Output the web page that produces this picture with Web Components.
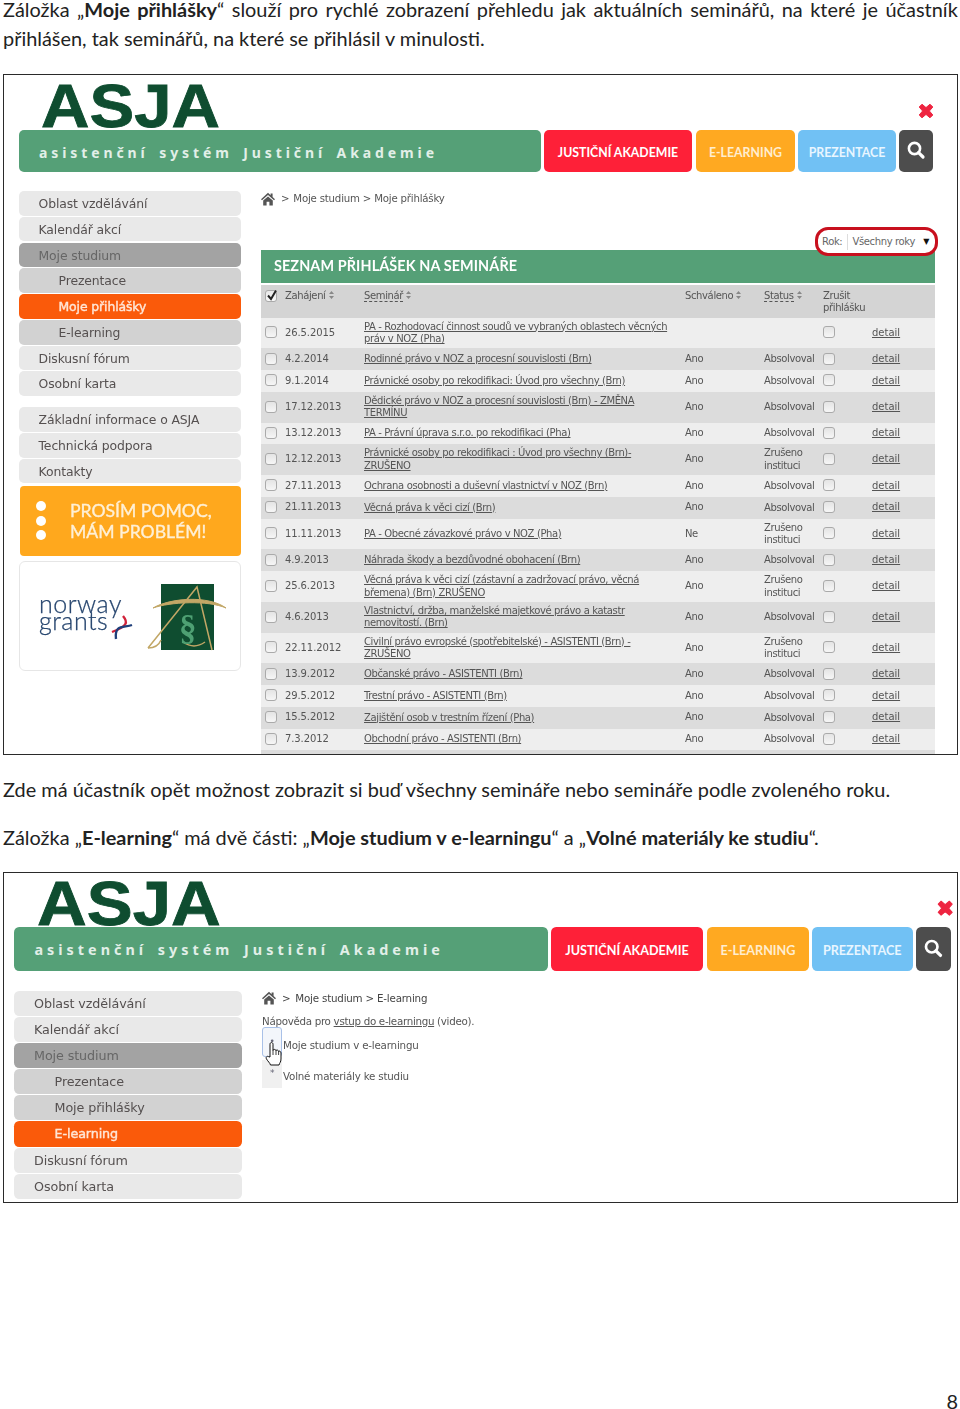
<!DOCTYPE html>
<html lang="cs">
<head>
<meta charset="utf-8">
<title>Moje přihlášky</title>
<style>
    html, body { margin: 0; padding: 0; background: #fff; }
    body { height: 1409px; overflow: hidden; font-family: "Lato", "Liberation Sans", sans-serif; color: #222; }
</style>
</head>
<body>
<doc-page>
    <doc-para justify style="margin-top:-5px">Záložka „<b>Moje přihlášky</b>“ slouží pro rychlé zobrazení přehledu jak aktuálních seminářů, na které je účastník přihlášen, tak seminářů, na které se přihlásil v minulosti.</doc-para>

    <asja-shot style="margin-top:21px;height:681px">
        <asja-header style="--top:55px;--left:15px;--bar:522px;--logo-left:22px"></asja-header>
        <shot-body style="--gap:20px;--mt:19px">
            <side-nav style="--item-gap:1.2px">
                <nav-item>Oblast vzdělávání</nav-item>
                <nav-item>Kalendář akcí</nav-item>
                <nav-item kind="open">Moje studium</nav-item>
                <nav-item kind="sub">Prezentace</nav-item>
                <nav-item kind="active">Moje přihlášky</nav-item>
                <nav-item kind="sub">E-learning</nav-item>
                <nav-item>Diskusní fórum</nav-item>
                <nav-item>Osobní karta</nav-item>
                <nav-item style="margin-top:10px">Základní informace o ASJA</nav-item>
                <nav-item>Technická podpora</nav-item>
                <nav-item>Kontakty</nav-item>
                <help-box></help-box>
                <partner-box></partner-box>
            </side-nav>
            <reg-main>
                <crumb-bar>Moje studium &gt; Moje přihlášky</crumb-bar>
                <seminar-table>
                    <seminar-row date="26.5.2015">PA - Rozhodovací činnost soudů ve vybraných oblastech věcných práv v NOZ (Pha)</seminar-row>
                    <seminar-row date="4.2.2014" approved="Ano" status="Absolvoval">Rodinné právo v NOZ a procesní souvislosti (Brn)</seminar-row>
                    <seminar-row date="9.1.2014" approved="Ano" status="Absolvoval">Právnické osoby po rekodifikaci: Úvod pro všechny (Brn)</seminar-row>
                    <seminar-row date="17.12.2013" approved="Ano" status="Absolvoval">Dědické právo v NOZ a procesní souvislosti (Brn) - ZMĚNA TERMÍNU</seminar-row>
                    <seminar-row date="13.12.2013" approved="Ano" status="Absolvoval">PA - Právní úprava s.r.o. po rekodifikaci (Pha)</seminar-row>
                    <seminar-row date="12.12.2013" approved="Ano" status="Zrušeno instituci">Právnické osoby po rekodifikaci : Úvod pro všechny (Brn)- ZRUŠENO</seminar-row>
                    <seminar-row date="27.11.2013" approved="Ano" status="Absolvoval">Ochrana osobnosti a duševní vlastnictví v NOZ (Brn)</seminar-row>
                    <seminar-row date="21.11.2013" approved="Ano" status="Absolvoval">Věcná práva k věci cizí (Brn)</seminar-row>
                    <seminar-row date="11.11.2013" approved="Ne" status="Zrušeno instituci">PA - Obecné závazkové právo v NOZ (Pha)</seminar-row>
                    <seminar-row date="4.9.2013" approved="Ano" status="Absolvoval">Náhrada škody a bezdůvodné obohacení (Brn)</seminar-row>
                    <seminar-row date="25.6.2013" approved="Ano" status="Zrušeno instituci">Věcná práva k věci cizí (zástavní a zadržovací právo, věcná břemena) (Brn) ZRUŠENO</seminar-row>
                    <seminar-row date="4.6.2013" approved="Ano" status="Absolvoval">Vlastnictví, držba, manželské majetkové právo a katastr nemovitostí. (Brn)</seminar-row>
                    <seminar-row date="22.11.2012" approved="Ano" status="Zrušeno instituci">Civilní právo evropské (spotřebitelské) - ASISTENTI (Brn) - ZRUŠENO</seminar-row>
                    <seminar-row date="13.9.2012" approved="Ano" status="Absolvoval">Občanské právo - ASISTENTI (Brn)</seminar-row>
                    <seminar-row date="29.5.2012" approved="Ano" status="Absolvoval">Trestní právo - ASISTENTI (Brn)</seminar-row>
                    <seminar-row date="15.5.2012" approved="Ano" status="Absolvoval">Zajištění osob v trestním řízení (Pha)</seminar-row>
                    <seminar-row date="7.3.2012" approved="Ano" status="Absolvoval">Obchodní právo - ASISTENTI (Brn)</seminar-row>
                    <seminar-row blank></seminar-row>
                </seminar-table>
            </reg-main>
        </shot-body>
    </asja-shot>

    <doc-para style="margin-top:20px">Zde má účastník opět možnost zobrazit si buď všechny semináře nebo semináře podle zvoleného roku.</doc-para>
    <doc-para style="margin-top:19px">Záložka „<b>E-learning</b>“ má dvě části: „<b>Moje studium v e-learningu</b>“ a „<b>Volné materiály ke studiu</b>“.</doc-para>

    <asja-shot style="margin-top:20px;height:331px">
        <asja-header style="--top:53px;--left:9.7px;--bar:520px;--logo-left:22.5px;zoom:1.027"></asja-header>
        <shot-body style="--gap:19px;--mt:20px;--side-left:10px">
            <side-nav style="--item-gap:.9px;zoom:1.027">
                <nav-item>Oblast vzdělávání</nav-item>
                <nav-item>Kalendář akcí</nav-item>
                <nav-item kind="open">Moje studium</nav-item>
                <nav-item kind="sub">Prezentace</nav-item>
                <nav-item kind="sub">Moje přihlášky</nav-item>
                <nav-item kind="active">E-learning</nav-item>
                <nav-item>Diskusní fórum</nav-item>
                <nav-item>Osobní karta</nav-item>
            </side-nav>
            <learn-panel></learn-panel>
        </shot-body>
    </asja-shot>

    <page-number>8</page-number>
</doc-page>

<script>
function defineEl(name, html, extra) {
    const tpl = document.createElement("template");
    tpl.innerHTML = html;
    const cls = class extends HTMLElement {
        constructor() {
            super();
            this.attachShadow({ mode: "open" }).appendChild(tpl.content.cloneNode(true));
        }
        connectedCallback() {
            if (extra) extra(this);
        }
    };
    customElements.define(name, cls);
}

const UI_FONT = `"DejaVu Sans", "Liberation Sans", sans-serif`;

defineEl("doc-page", `
    <style>:host { display: block; padding: 0 2px 0 3px; }</style>
    <slot></slot>
`);

defineEl("doc-para", `
    <style>
        :host { display: block; font-size: 19.9px; line-height: 29px; color: #222; }
        :host([justify]) { text-align: justify; }
    </style>
    <slot></slot>
`);

defineEl("page-number", `
    <style>:host { display: block; text-align: right; margin-top: 186px; font-size: 19.9px; line-height: 24px; color: #222; }</style>
    <slot></slot>
`);

defineEl("asja-shot", `
    <style>
        :host { display: block; box-sizing: border-box; border: 1px solid #2a2a2a; background: #fff; overflow: hidden; }
        .in { filter: blur(.35px); height: 100%; }
    </style>
    <div class="in"><slot></slot></div>
`);

defineEl("asja-header", `
    <style>
        :host { display: block; padding-left: var(--left); font-family: "Lato", sans-serif; }
        .top { height: var(--top); position: relative; }
        .logo {
            position: absolute; left: var(--logo-left); bottom: -7px; transform: scaleX(1.1); transform-origin: left;
            font: bold 61px/61px "Liberation Sans", sans-serif; letter-spacing: 0; color: #0f4d30;
            -webkit-text-stroke: .8px #0f4d30;
        }
        .x { position: absolute; left: 899px; bottom: 11px; display: block; }
        .row { display: flex; gap: 3px; height: 42px; position: relative; }
        .bar {
            width: var(--bar); background: #55a077; border-radius: 5px; box-sizing: border-box;
            padding: 3px 0 0 20px; display: flex; align-items: center;
            font: bold 14px/1 "Noto Sans", sans-serif; letter-spacing: 3.9px; word-spacing: 3px; color: #e2efe8; white-space: nowrap;
        }
        .b {
            border-radius: 5px; color: #fff; font-weight: 700; font-size: 12.3px; white-space: nowrap; box-sizing: border-box; padding-top: 2px;
            display: flex; align-items: center; justify-content: center; opacity: .98;
        }
        .red { width: 148px; background: #fe1c35; }
        .org { width: 99px; background: #ffa81d; color: #ffedcf; margin-left: 1px; }
        .blu { width: 98px; background: #6fc0f4; color: #e8f6ff; }
        .drk { width: 34px; background: #4a4a4a; padding-top: 0; }
    </style>
    <div class="top">
        <div class="logo">ASJA</div>
        <svg class="x" width="16" height="16" viewBox="0 0 16 16"><path d="M1.2 4 4 1.2 8 4.6 12 1.2 14.8 4 11.4 8 14.8 12 12 14.8 8 11.4 4 14.8 1.2 12 4.6 8Z" fill="#ee2440" stroke="#ee2440" stroke-linejoin="round"/></svg>
    </div>
    <div class="row">
        <div class="bar">asistenční systém Justiční Akademie</div>
        <div class="b red">JUSTIČNÍ AKADEMIE</div>
        <div class="b org">E-LEARNING</div>
        <div class="b blu">PREZENTACE</div>
        <div class="b drk">
            <svg width="20" height="20" viewBox="0 0 20 20" style="margin-top:-2px"><circle cx="8.5" cy="8.5" r="5.6" fill="none" stroke="#fff" stroke-width="2.6"/><path d="M12.6 12.6 17 17" stroke="#fff" stroke-width="3.2" stroke-linecap="round"/></svg>
        </div>
    </div>
`);

defineEl("shot-body", `
    <style>
        :host { display: flex; align-items: flex-start; gap: var(--gap); margin-top: var(--mt); padding-left: var(--side-left, 15px); }
    </style>
    <slot></slot>
`);

defineEl("side-nav", `
    <style>:host { display: flex; flex-direction: column; gap: var(--item-gap); width: 222px; flex: none; }</style>
    <slot></slot>
`);

defineEl("nav-item", `
    <style>
        :host {
            display: block; height: 24.6px; box-sizing: border-box; padding-left: 19.5px;
            border-radius: 5px; background: #e9e9e9; color: #555050;
            font: 12.4px/26px ${UI_FONT}; letter-spacing: -.1px; white-space: nowrap;
        }
        :host([kind="open"]) { background: #a3a3a3; color: #666; }
        :host([kind="sub"]) { background: #d2d2d2; padding-left: 39.5px; }
        :host([kind="active"]) { background: #fa5a0a; color: #ffe6d6; padding-left: 39.5px; -webkit-text-stroke: .4px #ffe6d6; }
    </style>
    <slot></slot>
`);

defineEl("help-box", `
    <style>
        :host {
            display: flex; align-items: center; height: 70px; margin: 1px 0 0 1px; width: 221px; box-sizing: border-box;
            background: #ffa81d; border-radius: 4px; color: #fff0d6; font-family: "Lato", sans-serif;
        }
        .dots { display: flex; flex-direction: column; gap: 4.5px; margin: 0 24px 0 16px; }
        .dots i { display: block; width: 10px; height: 10px; border-radius: 50%; background: #fff; }
        .t { font-size: 17.6px; line-height: 21px; font-weight: 400; -webkit-text-stroke: .35px #fff0d6; white-space: nowrap; }
    </style>
    <div class="dots"><i></i><i></i><i></i></div>
    <div class="t">PROSÍM POMOC,<br>MÁM PROBLÉM!</div>
`);

defineEl("partner-box", `
    <style>
        :host {
            display: block; position: relative; height: 110px; margin-top: 4px; box-sizing: border-box;
            border: 1px solid #e6e6e6; border-radius: 6px; background: #fff;
        }
        .nw { position: absolute; left: 19px; top: 33px; font: 300 25px/17px "Lato", sans-serif; letter-spacing: .5px; color: #27466f; -webkit-text-stroke: .25px #27466f; }
        svg { position: absolute; left: 0; top: 0; }
        .par { position: absolute; left: 159px; top: 47px; font: bold 35px/40px "Liberation Serif", serif; color: #4ea073; }
    </style>
    <div class="nw">norway<br>grants</div>
    <svg width="222" height="110" viewBox="0 0 222 110">
        <path d="M103 54C108 60 108 64 92 70" fill="none" stroke="#d1233a" stroke-width="2.4"/>
        <path d="M112 63C104 66 94 62 96 77" fill="none" stroke="#1f3f7a" stroke-width="2.4"/>
        <rect x="141" y="22" width="53" height="66" fill="#0f4d30"/>
        <path d="M128 86 177 25 192 88" fill="none" stroke="#c2a766" stroke-width="1.5"/>
        <path d="M133 46C150 36 188 33 206 46C188 38 150 40 133 46Z" fill="#c2a766" stroke="#c2a766"/>
        <path d="M128 86C134 86 139 83 141 78" fill="none" stroke="#c2a766" stroke-width="1.5"/>
        <path d="M163 80C170 85 178 85 185 80" fill="none" stroke="#c2a766" stroke-width="1.5"/>
    </svg>
    <div class="par">§</div>
`);

defineEl("reg-main", `
    <style>
        :host { display: block; width: 674px; flex: none; position: relative; }
    </style>
    <slot></slot>
    <year-filter></year-filter>
`);

const HOME_ICON = `<svg width="14" height="14" viewBox="0 0 14 14" style="flex:none"><path d="M7 .8 0 7.2 1 8.3 7 3 13 8.3 14 7.2 11.6 5V1.4H9.6V3.2Z" fill="#555"/><path d="M2.2 8.6 7 4.4 11.8 8.6V13.6H8.4V9.8H5.6V13.6H2.2Z" fill="#555"/></svg>`;

defineEl("crumb-bar", `
    <style>
        :host {
            display: flex; align-items: flex-start; gap: 6px; height: 58.5px; padding-top: .5px; color: #555;
            font: 10.2px/14px ${UI_FONT}; letter-spacing: -.2px; white-space: nowrap;
        }
        span + span { margin-left: -2px; }
    </style>
    ${HOME_ICON}<span>&gt;</span><span><slot></slot></span>
`);

defineEl("year-filter", `
    <style>
        :host {
            position: absolute; left: 554px; top: 36px; width: 123px; height: 29px; box-sizing: border-box;
            border: 3px solid #c8101e; border-radius: 13px; background: #fff; display: flex; align-items: center;
            padding-left: 4px; color: #666; font: 10px/1 ${UI_FONT}; letter-spacing: -.35px;
        }
        .sel {
            margin-left: 5px; width: 88px; height: 16px; box-sizing: border-box; border-left: 1px solid #ddd;
            display: flex; align-items: center; justify-content: space-between; padding: 0 6px 0 4px; white-space: nowrap;
        }
        .sel i { font-style: normal; color: #111; font-size: 8px; }
    </style>
    <span>Rok:</span><div class="sel"><span>Všechny roky</span><i>▼</i></div>
`);

const SORT = `<svg width="5" height="8" viewBox="0 0 5 8" style="margin-left:3px"><path d="M2.5 0 5 3H0ZM2.5 8 0 5H5Z" fill="#888"/></svg>`;

defineEl("seminar-table", `
    <style>
        :host { display: block; font: 10px/12.4px ${UI_FONT}; letter-spacing: -.37px; color: #555; }
        .title {
            height: 33px; background: #55a077; color: #fff; display: flex; align-items: center; padding-left: 13px;
            font: bold 14.4px/1 "Lato", sans-serif; letter-spacing: .1px; margin-bottom: 2px;
        }
        .head {
            display: grid; grid-template-columns: 24px 79px 321px 79px 59px 112px; align-items: start;
            height: 32.5px; background: #d4d4d4; box-sizing: border-box; padding-top: 5px;
        }
        .box {
            width: 12px; height: 12px; margin-left: 4px; box-sizing: border-box; border: 1px solid #aaa; border-radius: 3px;
            background: linear-gradient(#e8e8e8, #f8f8f8); position: relative;
        }
        .box svg { position: absolute; left: 0; top: -2px; }
        .dot { border-bottom: 1px dashed #555; }
    </style>
    <div class="title">SEZNAM PŘIHLÁŠEK NA SEMINÁŘE</div>
    <div class="head">
        <div class="box"><svg width="12" height="12" viewBox="0 0 12 12"><path d="M2 6.5 5 10 10 1.5" fill="none" stroke="#222" stroke-width="2"/></svg></div>
        <div>Zahájení${SORT}</div>
        <div><span class="dot">Seminář</span>${SORT}</div>
        <div>Schváleno${SORT}</div>
        <div><span class="dot">Status</span>${SORT}</div>
        <div>Zrušit<br>přihlášku</div>
    </div>
    <slot></slot>
`);

defineEl("seminar-row", `
    <style>
        :host {
            display: grid; grid-template-columns: 24px 79px 321px 79px 59px 49px 63px; align-items: center;
            min-height: 21.8px; background: #eeeeee;
        }
        :host(:nth-child(even)) { background: #dcdcdc; }
        .box {
            width: 12px; height: 12px; margin: -1px 0 0 4px; box-sizing: border-box; border: 1px solid #aaa; border-radius: 3px;
            background: linear-gradient(#e4e4e4, #f6f6f6);
        }
        .box.c { margin-left: 0; }
        .ti { text-decoration: underline; padding: 3px 0 2.9px; width: 310px; }
        .da { letter-spacing: -.1px; }
        .de { text-decoration: underline; letter-spacing: 0; }
        .st { width: 54px; padding: 3px 0 2.9px; }
    </style>
    <div class="box"></div>
    <div class="da"></div>
    <div class="ti"><slot></slot></div>
    <div class="ap"></div>
    <div class="st"></div>
    <div class="box c"></div>
    <div class="de">detail</div>
`, el => {
    const s = el.shadowRoot;
    s.querySelector(".da").textContent = el.getAttribute("date") || "";
    s.querySelector(".ap").textContent = el.getAttribute("approved") || "";
    s.querySelector(".st").textContent = el.getAttribute("status") || "";
    if (el.hasAttribute("blank")) s.querySelector(".de").textContent = "";
});

defineEl("learn-panel", `
    <style>
        :host {
            display: block; position: relative; width: 680px; padding-left: 1px; color: #555;
            font: 10.3px/14px ${UI_FONT}; letter-spacing: -.3px;
        }
        .crumb { display: flex; gap: 6px; height: 24px; align-items: flex-start; color: #444; box-sizing: border-box; }
        .crumb span + span { margin-left: -1px; letter-spacing: -.2px; }
        .help { height: 12px; white-space: nowrap; margin-top: -1px; padding-bottom: 1px; }
        .help a { text-decoration: underline; color: #555; }
        .li { display: flex; align-items: flex-start; }
        .mark { width: 20px; box-sizing: border-box; flex: none; text-align: center; font-size: 9px; color: #667; }
        .a .mark { height: 30px; border: 1px solid #a9c1e8; border-radius: 3px; background: #f3f6fb; line-height: 26px; }
        .b .mark { height: 28px; background: #f0f0f0; line-height: 26px; }
        .b { margin-top: 3px; }
        .tx { margin: 11px 0 0 1px; letter-spacing: -.2px; }
        .b .tx { margin-top: 9px; }
        .hand { position: absolute; left: 4px; top: 50px; }
    </style>
    <div class="crumb">${HOME_ICON}<span>&gt;</span><span>Moje studium &gt; E-learning</span></div>
    <div class="help">Nápověda pro <a>vstup do e-learningu</a> (video).</div>
    <div class="li a"><div class="mark">•</div><div class="tx">Moje studium v e-learningu</div></div>
    <div class="li b"><div class="mark">*</div><div class="tx">Volné materiály ke studiu</div></div>
    <svg class="hand" width="17" height="25" viewBox="0 0 17 25"><path d="M5 16V3.2C5 1 8 1 8 3.2V9.5C8 8 11 8 11 9.8 11 8.6 13.6 8.8 13.6 10.6 13.8 9.6 16 10 16 12V18C16 21 14.5 22 14 24H5.5C5 22 3 20.5 1.5 18 .3 16 2.5 14.5 3.8 15.8Z" fill="#fff" stroke="#111" stroke-width="1" stroke-linejoin="round"/><path d="M8 9.5V14M11 9.8V14M13.6 10.6V14" stroke="#111" stroke-width=".8"/></svg>
`);
</script>
</body>
</html>
